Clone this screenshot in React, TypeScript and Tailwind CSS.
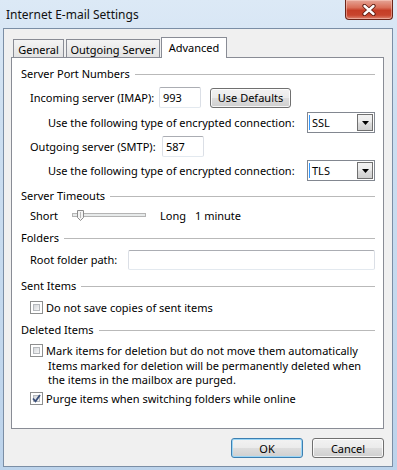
import React from "react";

const btnFill =
  "bg-[linear-gradient(180deg,#f2f2f2_0%,#ebebeb_48%,#dddddd_52%,#cfcfcf_100%)]";

function SectionHeader({ title }: { title: string }) {
  return (
    <div className="flex items-center h-[16px] pl-[9px] pr-[8px]">
      <span className="whitespace-nowrap">{title}</span>
      <div className="flex-1 h-px bg-[#b9b9b9] ml-[5px] mt-[2px]" />
    </div>
  );
}

function TextBox({ value, className }: { value?: string; className?: string }) {
  return (
    <div
      className={`h-[21px] border border-[#abadb3] border-x-[#dbdfe6] border-b-[#e3e9ef] rounded-[2px] bg-white flex items-center pl-[3px] ${className ?? ""}`}
    >
      {value}
    </div>
  );
}

function Select({ value }: { value: string }) {
  return (
    <div className="w-[68px] h-[21px] border border-[#828790] bg-white flex items-center p-px">
      <div className="w-px h-[15px] bg-[#3399ff]" />
      <span className="ml-[2px] flex-1">{value}</span>
      <div className="w-[16px] h-[17px] border border-[#707070] bg-[linear-gradient(180deg,#f2f2f2_0%,#ebebeb_48%,#dddddd_52%,#cfcfcf_100%)] flex items-center justify-center">
        <svg width="7" height="4" viewBox="0 0 7 4">
          <path d="M0 0h7L3.5 4z" fill="#000" />
        </svg>
      </div>
    </div>
  );
}

function Button({ label, isDefault, className }: { label: string; isDefault?: boolean; className?: string }) {
  return (
    <div
      className={`h-[20px] rounded-[3px] border flex items-center justify-center ${btnFill} ${
        isDefault
          ? "border-[#3c7fb1] shadow-[inset_0_0_0_1px_#9bd6f6]"
          : "border-[#707070] shadow-[inset_0_0_0_1px_rgba(255,255,255,0.8)]"
      } ${className ?? ""}`}
    >
      {label}
    </div>
  );
}

function Checkbox({ checked }: { checked?: boolean }) {
  return (
    <div className="w-[13px] h-[13px] border border-[#8e8f8f] bg-white p-[2px] relative shrink-0">
      <div className="w-full h-full border border-[#b6b9bd] bg-gradient-to-br from-[#d4d7db] to-[#f7f7f7]" />
      {checked && (
        <svg className="absolute left-[1px] top-[1px]" width="9" height="9" viewBox="0 0 9 9">
          <path d="M1 4.5l2.5 2.8L8 1" fill="none" stroke="#3a4f7a" strokeWidth="1.8" />
        </svg>
      )}
    </div>
  );
}

function CheckRow({ label, checked }: { label: string; checked?: boolean }) {
  return (
    <div className="flex items-center h-[16px] pl-[18px]">
      <Checkbox checked={checked} />
      <span className="ml-[3px] whitespace-nowrap">{label}</span>
    </div>
  );
}

function Slider() {
  return (
    <svg width="88" height="20" viewBox="0 0 88 20" className="shrink-0">
      <rect x="0.5" y="8.5" width="73" height="3" fill="#e7eaea" stroke="#b4b4b4" />
      <path d="M5.5 5.5h6v7l-3 3-3-3z" fill="#f4f4f4" stroke="#8c8c8c" />
      <path d="M8.5 7v6" stroke="#b8b8b8" />
    </svg>
  );
}

function CloseButton() {
  return (
    <div className="w-[48px] h-[20px] mr-[4px] rounded-b-[4px] border border-t-0 border-[#6b2418] bg-[linear-gradient(180deg,#e6a597_0%,#d96e58_40%,#c53d26_55%,#c8452e_80%,#dd8470_100%)] flex items-center justify-center shadow-[inset_0_0_0_1px_rgba(255,220,210,0.45)]">
      <svg width="14" height="12" viewBox="0 0 14 12">
        <path d="M2.5 2l9 8M11.5 2l-9 8" stroke="#5a1a10" strokeWidth="4.2" strokeLinecap="round" />
        <path d="M2.5 2l9 8M11.5 2l-9 8" stroke="#ffffff" strokeWidth="2.4" strokeLinecap="round" />
      </svg>
    </div>
  );
}

export default function App() {
  return (
    <div className="w-[397px] h-[470px] flex flex-col overflow-hidden text-[11px] leading-[13px] text-black font-['Segoe_UI','Noto_Sans',sans-serif] bg-[linear-gradient(180deg,#dce9f6_0%,#cddff1_25%,#bcd3eb_100%)]">
      {/* Title bar */}
      <div className="h-[28px] flex items-start shrink-0">
        <div className="pl-[6px] pt-[8px] text-[12px] leading-[14px] text-[#111]">Internet E-mail Settings</div>
        <div className="ml-auto">
          <CloseButton />
        </div>
      </div>

      {/* Client area */}
      <div className="flex-1 ml-[3px] mr-[4px] mb-[3px] border border-[#7b8ea5] bg-[#f0f0f0] flex flex-col pl-[7px] pt-[8px]">
        {/* Tabs */}
        <div className="flex items-end h-[20px] pl-[2px]">
          <div className="w-[51px] h-[18px] border border-b-0 border-[#898c95] bg-gradient-to-b from-[#f4f4f4] to-[#e3e3e3] flex items-center justify-center pt-[1px]">
            General
          </div>
          <div className="w-[94px] h-[18px] ml-[2px] border border-b-0 border-[#898c95] bg-gradient-to-b from-[#f4f4f4] to-[#e3e3e3] flex items-center justify-center pt-[1px]">
            Outgoing Server
          </div>
          <div className="w-[66px] h-[21px] ml-[1px] -mb-px relative z-10 border border-b-0 border-[#898c95] bg-white flex items-center justify-center pb-[1px]">
            Advanced
          </div>
        </div>

        {/* Panel */}
        <div className="w-[373px] h-[372px] border border-[#898c95] bg-white flex flex-col pt-[7px]">
          <SectionHeader title="Server Port Numbers" />
          <div className="flex items-center h-[21px] mt-[6px] pl-[18px]">
            <span className="w-[129px] whitespace-nowrap">Incoming server (IMAP):</span>
            <TextBox value="993" className="w-[42px]" />
            <Button label="Use Defaults" className="w-[81px] ml-[9px]" />
          </div>
          <div className="flex items-center h-[21px] mt-[4px] pl-[36px]">
            <span className="w-[259px] whitespace-nowrap">Use the following type of encrypted connection:</span>
            <Select value="SSL" />
          </div>
          <div className="flex items-center h-[21px] mt-[3px] pl-[18px]">
            <span className="w-[132px] whitespace-nowrap">Outgoing server (SMTP):</span>
            <TextBox value="587" className="w-[42px]" />
          </div>
          <div className="flex items-center h-[21px] mt-[3px] pl-[36px]">
            <span className="w-[259px] whitespace-nowrap">Use the following type of encrypted connection:</span>
            <Select value="TLS" />
          </div>

          <div className="mt-[6px]">
            <SectionHeader title="Server Timeouts" />
          </div>
          <div className="flex items-center h-[20px] mt-[2px] pl-[18px]">
            <span className="w-[42px]">Short</span>
            <Slider />
            <span className="w-[35px]">Long</span>
            <span>1 minute</span>
          </div>

          <div className="mt-[4px]">
            <SectionHeader title="Folders" />
          </div>
          <div className="flex items-center h-[20px] mt-[5px] pl-[18px]">
            <span className="w-[98px] whitespace-nowrap -mt-[2px]">Root folder path:</span>
            <TextBox className="w-[247px] !h-[20px]" />
          </div>

          <div className="mt-[7px]">
            <SectionHeader title="Sent Items" />
          </div>
          <div className="mt-[6px]">
            <CheckRow label="Do not save copies of sent items" />
          </div>

          <div className="mt-[6px]">
            <SectionHeader title="Deleted Items" />
          </div>
          <div className="mt-[5px]">
            <CheckRow label="Mark items for deletion but do not move them automatically" />
          </div>
          <div className="mt-[1px] pl-[36px] leading-[14px] whitespace-nowrap">
            Items marked for deletion will be permanently deleted when
            <br />
            the items in the mailbox are purged.
          </div>
          <div className="mt-[3px]">
            <CheckRow label="Purge items when switching folders while online" checked />
          </div>
        </div>

        {/* Dialog buttons */}
        <div className="w-[373px] flex justify-end gap-[9px] mt-[9px]">
          <Button label="OK" isDefault className="w-[72px]" />
          <Button label="Cancel" className="w-[72px]" />
        </div>
      </div>
    </div>
  );
}
